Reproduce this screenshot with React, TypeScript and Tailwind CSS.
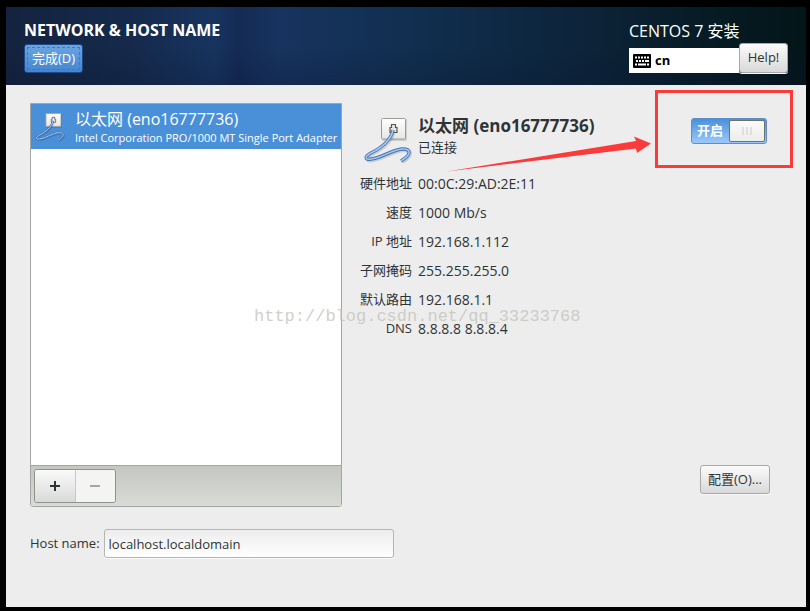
import React, { useState } from "react";

const details = [
  { label: "硬件地址", value: "00:0C:29:AD:2E:11" },
  { label: "速度", value: "1000 Mb/s" },
  { label: "IP 地址", value: "192.168.1.112" },
  { label: "子网掩码", value: "255.255.255.0" },
  { label: "默认路由", value: "192.168.1.1" },
  { label: "DNS", value: "8.8.8.8 8.8.8.4" },
];

const greyButton =
  "rounded-[3px] border border-[#a8a8a8] bg-linear-to-b from-[#fbfbfb] to-[#d9d9d9] text-[#2e3436] shadow-[0_1px_0_#fafafa]";

const cable = "M29 13C27 23 17 31 7 36C0 40 1 43 7 42C18 41 29 32 39 32C48 32 47 38 37 44";

function WiredIcon({ className }: { className: string }) {
  return (
    <svg viewBox="0 0 48 46" className={className} aria-hidden="true">
      <defs>
        <linearGradient id="plate" x1="0" y1="0" x2="0" y2="1">
          <stop offset="0" stopColor="#ffffff" />
          <stop offset="1" stopColor="#e6e6e3" />
        </linearGradient>
      </defs>
      <rect x="18" y="2" width="25" height="22" rx="1" fill="#00000022" />
      <rect x="17.5" y="1.5" width="24" height="20.5" rx="1" fill="url(#plate)" stroke="#9a9c97" />
      <path d="M26 15.500v-5h1.500v-3h4v3h1.500v5z" fill="#e8e8e4" stroke="#555753" strokeWidth="1.200" />
      <path d={cable} transform="translate(1 1.500)" fill="none" stroke="#00000022" strokeWidth="3.600" />
      <path d={cable} fill="none" stroke="#4374b4" strokeWidth="3.400" />
      <path d={cable} fill="none" stroke="#a3c5ee" strokeWidth="1.600" />
    </svg>
  );
}

function KeyboardIcon() {
  return (
    <svg viewBox="0 0 18 14" className="h-3.5 w-[18px]" aria-hidden="true">
      <rect width="18" height="14" rx="1" fill="#000" />
      <path
        d="M2 3.500h2M5 3.500h2M8 3.500h2M11 3.500h2M14 3.500h2M3 7h2M6 7h2M9 7h2M12 7h4M2 10.500h2M5 10.500h8M14 10.500h2"
        stroke="#fff"
        strokeWidth="2"
      />
    </svg>
  );
}

export default function App() {
  const [on, setOn] = useState(true);
  const [host, setHost] = useState("localhost.localdomain");

  return (
    <div className="flex min-h-screen flex-col bg-black pt-[7px] pr-1 pb-1 pl-1.5 font-['Open_Sans','Noto_Sans_CJK_SC',sans-serif] text-[13px] text-[#2e3436]">
      <div className="relative flex flex-1 flex-col bg-[#ededed]">
        <header className="flex h-[78px] justify-between bg-[linear-gradient(180deg,#0000_50%,#0a143044),linear-gradient(90deg,#14233f,#152a4c_16%,#17345f_26%,#142b54_29%,#17335f_34%,#112f50_50%,#0c2338_74%,#071c26_86%,#031518)] px-[18px]">
          <div className="flex flex-col items-start pt-[11px]">
            <h1 className="text-base leading-6 font-bold text-white">NETWORK &amp; HOST NAME</h1>
            <button className="mt-0.5 h-[29px] rounded-[3px] border border-[#1c4a8c] bg-linear-to-b from-[#6ba5e0] to-[#4485d0] p-0.5 text-white">
              <span className="flex h-full items-center border border-dashed border-[#4479b3] px-1">完成(D)</span>
            </button>
          </div>
          <div className="pt-3">
            <p className="text-base leading-6 text-white">CENTOS 7 安装</p>
            <div className="flex items-end">
              <div className="flex h-[25px] w-[110px] items-center gap-1 bg-white pl-1 font-bold text-black">
                <KeyboardIcon />
                <span>cn</span>
              </div>
              <button className={`h-[30px] w-[49px] ${greyButton}`}>Help!</button>
            </div>
          </div>
        </header>

        <main className="flex flex-col pt-[18px] pr-9 pb-12 pl-6">
          <div className="flex gap-[18px]">
            <section className="flex h-[404px] w-[312px] flex-col rounded-b-[3px] border border-[#a3a5a2] bg-white">
              <div className="flex h-[45px] items-center gap-2.5 bg-[#4a90d9] pl-1 text-white">
                <WiredIcon className="h-[30px] w-[30px]" />
                <div>
                  <p className="text-base leading-[22px]">以太网 (eno16777736)</p>
                  <p className="text-[11px] leading-4 whitespace-nowrap">Intel Corporation PRO/1000 MT Single Port Adapter</p>
                </div>
              </div>
              <div className="flex-1" />
              <div className="flex h-[41px] items-center rounded-b-[2px] border-t border-[#a3a5a2] bg-linear-to-b from-[#c3c6c1] to-[#d9dbd7] pl-[3px]">
                <div className="flex h-[34px] w-[82px] overflow-hidden rounded-[3px] border border-[#8f918e]">
                  <button aria-label="+" className="flex flex-1 items-center justify-center border-r border-[#c8c8c8] bg-linear-to-b from-[#fafafa] to-[#d9d9d9]">
                    <svg viewBox="0 0 10 10" className="size-2.5"><path d="M0 5h10M5 0v10" stroke="#2e3436" strokeWidth="2" /></svg>
                  </button>
                  <button aria-label="−" disabled className="flex flex-1 items-center justify-center bg-[#f4f4f2]">
                    <svg viewBox="0 0 10 10" className="size-2.5"><path d="M0 5h10" stroke="#a5a8a4" strokeWidth="2" /></svg>
                  </button>
                </div>
              </div>
            </section>

            <section className="flex flex-1 flex-col pt-3">
              <div className="flex h-[54px] items-start">
                <WiredIcon className="mt-0.5 ml-1 h-[46px] w-12" />
                <div className="ml-1.5 flex-1">
                  <h2 className="text-[17px] leading-[22px] font-bold">以太网 (eno16777736)</h2>
                  <p className="leading-5">已连接</p>
                </div>
                <label className="relative mt-[3px] mr-[3px] flex h-[26px] w-[76px] items-center rounded-[3px] border border-[#5a8fcb] bg-linear-to-b from-[#4a90d9] to-[#9bc8fb] pl-[5px] font-bold text-white">
                  <input
                    type="checkbox"
                    role="switch"
                    checked={on}
                    onChange={(e) => setOn(e.target.checked)}
                    className="absolute inset-0 size-full cursor-pointer opacity-0"
                  />
                  <span className="flex-1">开启</span>
                  <span className="mr-px flex h-[22px] w-9 items-center justify-center gap-0.5 rounded-[2px] border border-[#6f716e] bg-linear-to-b from-[#fbfbfa] to-[#ececea]">
                    <i className="h-2 w-0.5 bg-[#e0e0de]" />
                    <i className="h-2 w-0.5 bg-[#e0e0de]" />
                    <i className="h-2 w-0.5 bg-[#e0e0de]" />
                  </span>
                </label>
              </div>
              <dl className="grid grid-cols-[52px_1fr] gap-x-1.5">
                {details.map((d) => (
                  <React.Fragment key={d.label}>
                    <dt className="text-right leading-[29px] whitespace-nowrap">{d.label}</dt>
                    <dd className="text-sm leading-[29px]">{d.value}</dd>
                  </React.Fragment>
                ))}
              </dl>
              <button className={`mt-auto mb-[13px] h-[29px] self-end px-[7px] ${greyButton}`}>配置(O)...</button>
            </section>
          </div>

          <div className="mt-[22px] flex items-center gap-1">
            <label htmlFor="host">Host name:</label>
            <input
              id="host"
              value={host}
              onChange={(e) => setHost(e.target.value)}
              className="h-[29px] w-[290px] rounded-[3px] border border-[#b4b6b3] bg-linear-to-b from-[#ededed] to-white px-1 shadow-[0_1px_0_#fafafa]"
            />
          </div>
        </main>

        <div className="pointer-events-none absolute top-[83px] right-[13px] h-[78px] w-[138px] border-[3px] border-[#fb3a3a]" />
        <svg viewBox="0 0 206 38" className="pointer-events-none absolute top-[128px] right-[154px] h-[38px] w-[206px]" aria-hidden="true">
          <path d="M1 36.500L190 6L188 1.500L205 8.500L191 18L190 13.500Z" fill="#fb3a3a" />
        </svg>
        <p className="pointer-events-none absolute top-[298px] left-[248px] font-['Liberation_Mono',monospace] text-[17px] leading-6 text-[#c4c4bb]/80">
          http://blog.csdn.net/qq_33233768
        </p>
      </div>
    </div>
  );
}
